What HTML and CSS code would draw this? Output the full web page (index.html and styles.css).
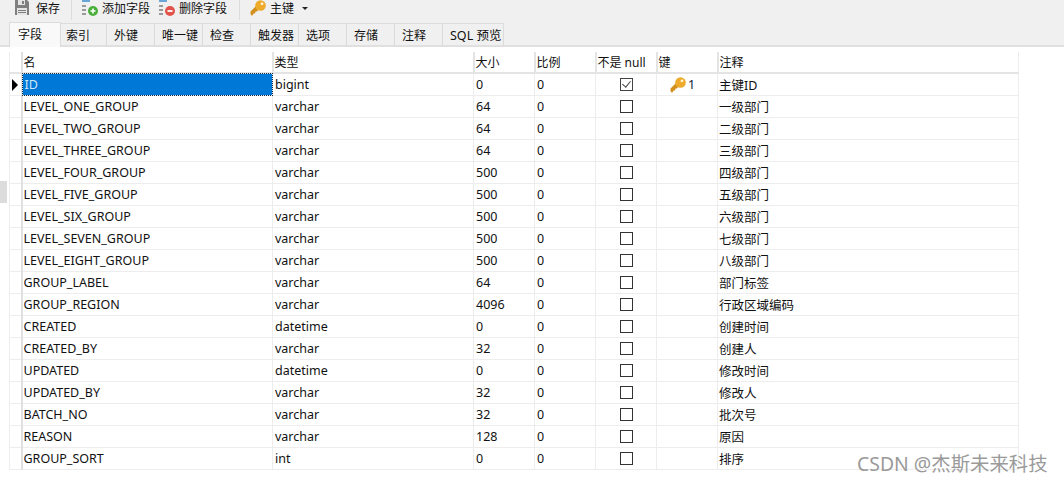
FILE: index.html
```html
<!DOCTYPE html>
<html lang="en">
<head>
    <meta charset="UTF-8">
    <title>字段</title>
    <link rel="stylesheet" href="styles.css">
</head>
<body>
    <svg class="defs" width="0" height="0">
        <defs>
            <symbol id="key" viewBox="0 0 16 16">
                <path d="M0.5 14 L0.5 11.5 L6.5 5.5 L10 9 L8 10 L7 11.5 L5.5 11.5 L5 13.5 L3.5 13.5 L2.5 15.5 L1.5 15.5 Z" fill="#d28f1c"/>
                <circle cx="10.5" cy="5.5" r="5.3" fill="#eeaa2b"/>
                <circle cx="12" cy="3.8" r="1.4" fill="#fff6dc"/>
            </symbol>
        </defs>
    </svg>

    <div class="toolbar">
        <div class="tool">
            <svg class="icon" viewBox="0 0 16 16">
                <path d="M-1 0 H11 L13 2 V15 H-1 Z" fill="#7f7f7f"/>
                <rect x="2" y="0" width="7" height="5" fill="#e4e4e4"/>
                <rect x="6" y="1" width="2" height="3" fill="#7f7f7f"/>
                <rect x="1" y="8" width="10" height="7" fill="#e4e4e4"/>
                <rect x="2" y="10" width="8" height="1" fill="#7f7f7f"/>
                <rect x="2" y="12" width="8" height="1" fill="#7f7f7f"/>
            </svg>
            <span>保存</span>
        </div>
        <div class="sep"></div>
        <div class="tool">
            <svg class="icon" viewBox="0 0 16 16">
                <rect x="0" y="0" width="8" height="2" fill="#6aa5d8"/>
                <rect x="0" y="5" width="4" height="2" fill="#9a9a9a"/>
                <rect x="0" y="9" width="4" height="2" fill="#9a9a9a"/>
                <rect x="0" y="13" width="4" height="2" fill="#9a9a9a"/>
                <circle cx="11" cy="11" r="5" fill="#4caf3c"/>
                <path d="M8.5 11 H13.5 M11 8.5 V13.5" stroke="#fff" stroke-width="1.6"/>
            </svg>
            <span>添加字段</span>
        </div>
        <div class="tool tool-del">
            <svg class="icon" viewBox="0 0 16 16">
                <rect x="0" y="0" width="8" height="2" fill="#6aa5d8"/>
                <rect x="0" y="5" width="4" height="2" fill="#9a9a9a"/>
                <rect x="0" y="9" width="4" height="2" fill="#9a9a9a"/>
                <rect x="0" y="13" width="4" height="2" fill="#9a9a9a"/>
                <circle cx="11" cy="11" r="5" fill="#e2534a"/>
                <path d="M8.5 11 H13.5" stroke="#fff" stroke-width="1.8"/>
            </svg>
            <span>删除字段</span>
        </div>
        <div class="sep"></div>
        <div class="tool">
            <svg class="icon"><use href="#key"/></svg>
            <span>主键</span>
            <i class="caret"></i>
        </div>
    </div>

    <div class="tabs">
        <div class="tab active">字段</div>
        <div class="tab tab-index">索引</div>
        <div class="tab">外键</div>
        <div class="tab">唯一键</div>
        <div class="tab">检查</div>
        <div class="tab">触发器</div>
        <div class="tab">选项</div>
        <div class="tab">存储</div>
        <div class="tab">注释</div>
        <div class="tab tab-sql">SQL 预览</div>
    </div>

    <div class="main">
        <div class="splitter"><div class="grip"></div></div>
        <table class="grid">
            <colgroup>
                <col class="c-ind"><col class="c-name"><col class="c-type"><col class="c-size"><col class="c-scale"><col class="c-null"><col class="c-key"><col class="c-note">
            </colgroup>
            <thead>
                <tr><th class="ind"></th><th>名</th><th>类型</th><th>大小</th><th>比例</th><th>不是 null</th><th>键</th><th>注释</th></tr>
            </thead>
            <tbody>
                <tr class="current"><td class="ind"><i class="arrow"></i></td><td class="sel"><span>ID</span></td><td>bigint</td><td>0</td><td>0</td><td class="chk"><i class="box on"></i></td><td class="pk"><svg class="pk-icon"><use href="#key"/></svg>1</td><td>主键ID</td></tr>
                <tr><td class="ind"></td><td>LEVEL_ONE_GROUP</td><td>varchar</td><td>64</td><td>0</td><td class="chk"><i class="box"></i></td><td></td><td>一级部门</td></tr>
                <tr><td class="ind"></td><td>LEVEL_TWO_GROUP</td><td>varchar</td><td>64</td><td>0</td><td class="chk"><i class="box"></i></td><td></td><td>二级部门</td></tr>
                <tr><td class="ind"></td><td>LEVEL_THREE_GROUP</td><td>varchar</td><td>64</td><td>0</td><td class="chk"><i class="box"></i></td><td></td><td>三级部门</td></tr>
                <tr><td class="ind"></td><td>LEVEL_FOUR_GROUP</td><td>varchar</td><td>500</td><td>0</td><td class="chk"><i class="box"></i></td><td></td><td>四级部门</td></tr>
                <tr><td class="ind"></td><td>LEVEL_FIVE_GROUP</td><td>varchar</td><td>500</td><td>0</td><td class="chk"><i class="box"></i></td><td></td><td>五级部门</td></tr>
                <tr><td class="ind"></td><td>LEVEL_SIX_GROUP</td><td>varchar</td><td>500</td><td>0</td><td class="chk"><i class="box"></i></td><td></td><td>六级部门</td></tr>
                <tr><td class="ind"></td><td>LEVEL_SEVEN_GROUP</td><td>varchar</td><td>500</td><td>0</td><td class="chk"><i class="box"></i></td><td></td><td>七级部门</td></tr>
                <tr><td class="ind"></td><td>LEVEL_EIGHT_GROUP</td><td>varchar</td><td>500</td><td>0</td><td class="chk"><i class="box"></i></td><td></td><td>八级部门</td></tr>
                <tr><td class="ind"></td><td>GROUP_LABEL</td><td>varchar</td><td>64</td><td>0</td><td class="chk"><i class="box"></i></td><td></td><td>部门标签</td></tr>
                <tr><td class="ind"></td><td>GROUP_REGION</td><td>varchar</td><td>4096</td><td>0</td><td class="chk"><i class="box"></i></td><td></td><td>行政区域编码</td></tr>
                <tr><td class="ind"></td><td>CREATED</td><td>datetime</td><td>0</td><td>0</td><td class="chk"><i class="box"></i></td><td></td><td>创建时间</td></tr>
                <tr><td class="ind"></td><td>CREATED_BY</td><td>varchar</td><td>32</td><td>0</td><td class="chk"><i class="box"></i></td><td></td><td>创建人</td></tr>
                <tr><td class="ind"></td><td>UPDATED</td><td>datetime</td><td>0</td><td>0</td><td class="chk"><i class="box"></i></td><td></td><td>修改时间</td></tr>
                <tr><td class="ind"></td><td>UPDATED_BY</td><td>varchar</td><td>32</td><td>0</td><td class="chk"><i class="box"></i></td><td></td><td>修改人</td></tr>
                <tr><td class="ind"></td><td>BATCH_NO</td><td>varchar</td><td>32</td><td>0</td><td class="chk"><i class="box"></i></td><td></td><td>批次号</td></tr>
                <tr><td class="ind"></td><td>REASON</td><td>varchar</td><td>128</td><td>0</td><td class="chk"><i class="box"></i></td><td></td><td>原因</td></tr>
                <tr><td class="ind"></td><td>GROUP_SORT</td><td>int</td><td>0</td><td>0</td><td class="chk"><i class="box"></i></td><td></td><td>排序</td></tr>
            </tbody>
        </table>
        <div class="watermark">CSDN @杰斯未来科技</div>
    </div>
</body>
</html>
```

FILE: styles.css
```css
html, body {
    margin: 0;
    padding: 0;
}
body {
    width: 1064px;
    height: 482px;
    overflow: hidden;
    background-color: #fff;
    color: #111;
    font-family: "Noto Sans", "Noto Sans CJK SC", sans-serif;
    font-size: 12px;
}
.defs {
    position: absolute;
}

/* Toolbar */
.toolbar {
    height: 16px;
    padding: 0 0 8px 16px;
    background-color: #f0f0f0;
    display: flex;
    align-items: center;
}
.tool {
    display: flex;
    align-items: center;
    gap: 4px;
    margin-right: 9px;
}
.tool:first-child {
    margin-right: 11px;
}
.tool-del {
    margin-right: 12px;
}
.icon {
    width: 16px;
    height: 16px;
    overflow: visible;
}
.sep {
    width: 1px;
    height: 20px;
    align-self: flex-start;
    background-color: #dcdcdc;
    margin-right: 10px;
}
.caret {
    width: 0;
    height: 0;
    margin-left: 4px;
    border-left: 3px solid transparent;
    border-right: 3px solid transparent;
    border-top: 3px solid #222;
}

/* Tabs */
.tabs {
    height: 21px;
    padding-left: 10px;
    background-color: #f0f0f0;
    border-bottom: 2px solid #e0e0e0;
    display: flex;
    align-items: flex-end;
}
.tab {
    width: 40px;
    height: 22px;
    line-height: 23px;
    padding-left: 7px;
    border-right: 1px solid #dcdcdc;
    border-top: 1px solid #dcdcdc;
    margin-bottom: -1px;
}
.tab.tab-index {
    width: 40px;
    padding-left: 5px;
}
.tab.tab-sql {
    width: 53px;
    font-size: 12.5px;
}
.tab.active {
    width: 42px;
    height: 24px;
    line-height: 23px;
    padding-left: 8px;
    background-color: #f9f9f9;
    border-left: 1px solid #dcdcdc;
    margin-left: -1px;
    margin-bottom: -2px;
    position: relative;
}

/* Grid */
.main {
    position: relative;
    display: flex;
    height: 435px;
}
.splitter {
    width: 9px;
    flex-shrink: 0;
    padding-top: 134px;
}
.grip {
    width: 7px;
    height: 22px;
    background-color: #dcdcdc;
}
.grid {
    margin-top: 5px;
    align-self: flex-start;
    border-collapse: collapse;
    table-layout: fixed;
    width: 1009px;
}
.c-ind { width: 12px; }
.c-name { width: 251px; }
.c-type { width: 201px; }
.c-size { width: 61px; }
.c-scale { width: 61px; }
.c-null { width: 61px; }
.c-key { width: 61px; }
.c-note { width: 301px; }
.grid th, .grid td {
    height: 21px;
    padding: 0 1px;
    font-weight: normal;
    font-size: 12.5px;
    text-align: left;
    white-space: nowrap;
    overflow: hidden;
    border-right: 1px solid #ededed;
    border-bottom: 1px solid #ededed;
}
.grid th {
    font-size: 12px;
    border-right: 2px solid #e4e4e4;
    border-bottom: 2px solid #e4e4e4;
    height: 20px;
}
.grid td:nth-child(3), .grid td:nth-child(4), .grid td:nth-child(5) {
    padding-left: 2px;
}
.grid th:last-child, .grid td:last-child {
    border-right: 1px solid #ededed;
}
.grid .ind {
    padding: 0;
    border-left: 1px solid #ededed;
    border-right: 2px solid #e0e0e0;
}
.arrow {
    display: block;
    width: 0;
    height: 0;
    margin-left: 2px;
    border-top: 6px solid transparent;
    border-bottom: 6px solid transparent;
    border-left: 6px solid #000;
}
.grid td.sel {
    padding: 0;
    background-color: #0078d7;
    color: #cfe6f8;
    outline: 1px dotted #0a2a4a;
    outline-offset: -1px;
}
.sel span {
    padding-left: 2px;
}
.grid td.chk {
    text-align: center;
    padding: 0;
}
.box {
    display: inline-block;
    width: 11px;
    height: 11px;
    border: 1px solid #333;
    vertical-align: middle;
    position: relative;
    top: -1px;
}
.box.on {
    border-color: #444;
}
.box.on::after {
    content: "";
    position: absolute;
    left: 3px;
    top: 0;
    width: 4px;
    height: 7px;
    border-right: 1px solid #444;
    border-bottom: 1px solid #444;
    transform: rotate(40deg);
}
.grid td.pk {
    padding-left: 13px;
    color: #123;
}
.pk-icon {
    width: 16px;
    height: 16px;
    vertical-align: middle;
    margin-right: 2px;
}
.watermark {
    position: absolute;
    left: 857px;
    top: 401px;
    font-size: 19.4px;
    color: #9a9a9a;
    white-space: nowrap;
}
```
